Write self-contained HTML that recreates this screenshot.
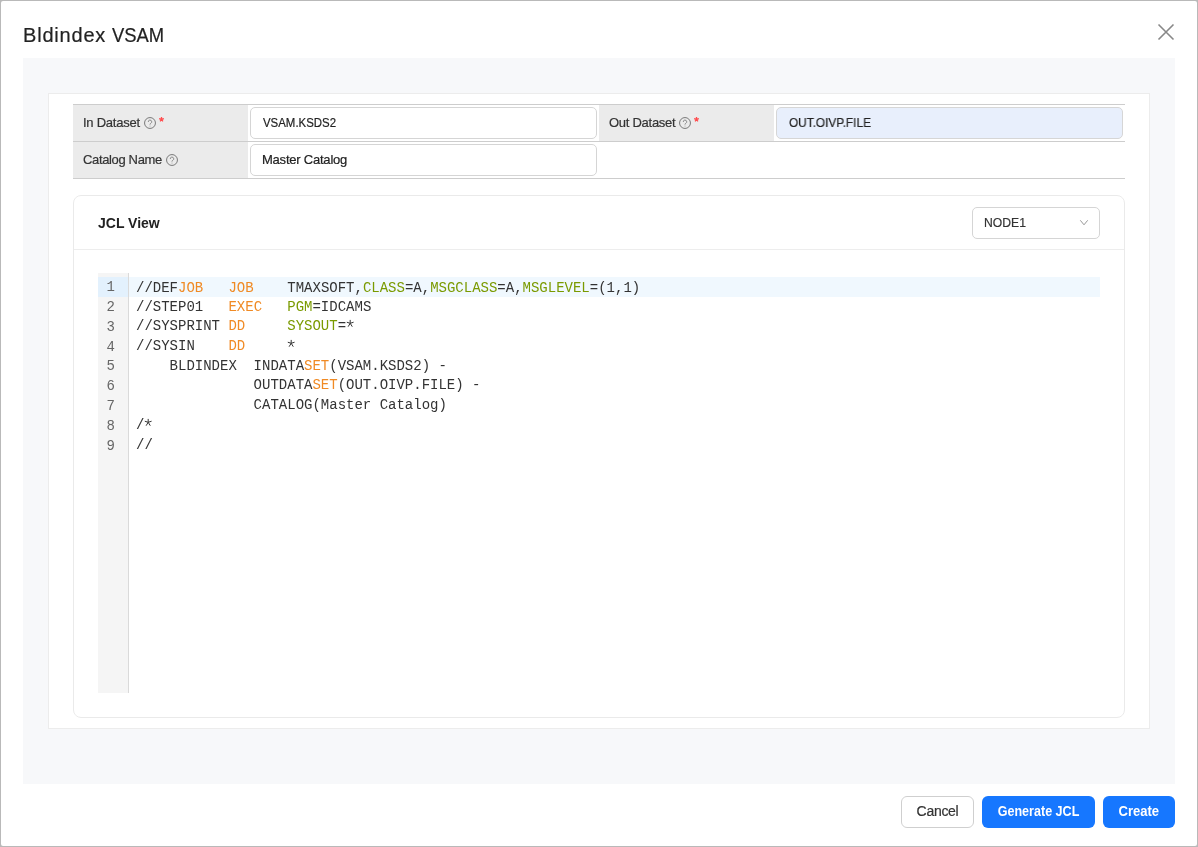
<!DOCTYPE html>
<html>
<head>
<meta charset="utf-8">
<style>
*{box-sizing:border-box;margin:0;padding:0}
html,body{width:1198px;height:847px;overflow:hidden;background:#b9b9b9;font-family:"Liberation Sans",sans-serif;}
.modal{position:absolute;left:1px;top:1px;width:1196px;height:845px;background:#fff;border-radius:2px;}
.abs{position:absolute}
.title{left:23px;top:23px;font-size:20px;line-height:24px;color:#222;white-space:nowrap}
.close{left:1157px;top:23px;width:18px;height:18px}
.content{left:23px;top:58px;width:1152px;height:726px;background:#f7f8fa}
.box{left:48px;top:93px;width:1102px;height:636px;background:#fff;border:1px solid #ececec}
.tbl{left:73px;top:104px;width:1052px;height:75px;border-top:1px solid #cdcdcd}
.row{position:absolute;left:0;width:1052px;height:37px;border-bottom:1px solid #cdcdcd}
.lab{position:absolute;top:0;height:36px;width:175px;background:#ebebeb;font-size:13px;color:#333;padding-left:10px;line-height:36px;white-space:nowrap}
.inp{position:absolute;top:2px;height:32px;border:1px solid #d5d5d5;border-radius:5px;background:#fff;font-size:13px;color:#222;padding-left:12px;line-height:30px;white-space:nowrap}
.help{display:inline-block;width:12px;height:12px;vertical-align:-2px;margin-left:4px}
.req{display:inline-block;margin-left:1.8px;vertical-align:0;position:relative;top:-4px}
.card{left:73px;top:195px;width:1052px;height:523px;border:1px solid #eaeaea;border-radius:8px;background:#fff}
.cardhdr{position:absolute;left:0;top:0;width:1050px;height:54px;border-bottom:1px solid #ededed}
.jcltitle{left:24px;top:17px;font-size:14px;font-weight:700;color:#222;line-height:20px}
.select{left:898px;top:11px;width:128px;height:32px;border:1px solid #d5d5d5;border-radius:5px;font-size:13px;color:#333;padding-left:11px;line-height:30px}
.editor{left:98px;top:273px;width:1002px;height:420px;background:#fff}
.gutter{position:absolute;left:0;top:0;width:31px;height:420px;background:#f5f5f5;border-right:1px solid #dadada}
.ln{position:absolute;left:0;width:30px;height:20px;font-family:"Liberation Mono",monospace;font-size:14px;line-height:20px;color:#666;text-align:right;padding-right:13px}
.ln.act{background:#e3f1fd}
.codeact{position:absolute;left:31px;top:4px;width:971px;height:19.6px;background:#f0f8fe}
.code{position:absolute;left:38px;font-family:"Liberation Mono",monospace;font-size:14px;line-height:20px;color:#333;white-space:pre}
.ast{color:transparent}
.astsvg{position:absolute;top:0}
.sx{display:inline-block;transform-origin:0 50%}
.sx.c{transform-origin:50% 50%}
.k{color:#f08a24}
.g{color:#7a9a00}
.btn{position:absolute;top:796px;height:32px;border-radius:6px;font-size:14px;line-height:31px;text-align:center;white-space:nowrap}
.cancel{left:901px;width:73px;border:1px solid #cfcfcf;background:#fff;color:#333;line-height:29px}
.gen{left:982px;width:113px;background:#1677ff;color:#fff;font-weight:700}
.create{left:1103px;width:72px;background:#1677ff;color:#fff;font-weight:700}
.title,.tbl,.card,.editor,.btn{will-change:transform}
.inp,.lab,.select,.cancel,.title{-webkit-text-stroke:0.2px currentColor}

</style>
</head>
<body>
<div class="modal"></div>
<div class="abs title"><span style="letter-spacing:0.8px">Bldindex</span> <span class="sx" style="transform:scaleX(0.92)">VSAM</span></div>
<svg class="abs close" viewBox="0 0 18 18"><path d="M1.5 1.5L16.5 16.5M16.5 1.5L1.5 16.5" stroke="#888" stroke-width="1.6" fill="none"/></svg>
<div class="abs content"></div>
<div class="abs box"></div>
<div class="abs tbl">
  <div class="row" style="top:0">
    <div class="lab" style="left:0"><span style="letter-spacing:-0.25px">In Dataset</span><svg class="help" viewBox="0 0 12 12"><circle cx="6" cy="6" r="5.45" stroke="#7a7a7a" stroke-width="1" fill="none"/><path d="M4.3 4.9a1.7 1.7 0 1 1 2.5 1.4c-.5.3-.8.6-.8 1.1v.2" stroke="#7a7a7a" stroke-width="0.9" fill="none"/><circle cx="6" cy="9" r="0.5" fill="#9a9a9a"/></svg><svg class="req" width="7" height="7" viewBox="0 0 7 7"><path d="M3.5 3.4V1.0M3.5 3.4L1.1 2.6M3.5 3.4L5.9 2.6M3.5 3.4L2.1 5.4M3.5 3.4L4.9 5.4" stroke="#ff4d4f" stroke-width="1.3" fill="none"/></svg></div>
    <div class="inp" style="left:177px;width:347px"><span class="sx" style="transform:scaleX(0.879)">VSAM.KSDS2</span></div>
    <div class="lab" style="left:526px"><span style="letter-spacing:-0.27px">Out Dataset</span><svg class="help" viewBox="0 0 12 12"><circle cx="6" cy="6" r="5.45" stroke="#7a7a7a" stroke-width="1" fill="none"/><path d="M4.3 4.9a1.7 1.7 0 1 1 2.5 1.4c-.5.3-.8.6-.8 1.1v.2" stroke="#7a7a7a" stroke-width="0.9" fill="none"/><circle cx="6" cy="9" r="0.5" fill="#9a9a9a"/></svg><svg class="req" width="7" height="7" viewBox="0 0 7 7"><path d="M3.5 3.4V1.0M3.5 3.4L1.1 2.6M3.5 3.4L5.9 2.6M3.5 3.4L2.1 5.4M3.5 3.4L4.9 5.4" stroke="#ff4d4f" stroke-width="1.3" fill="none"/></svg></div>
    <div class="inp" style="left:703px;width:347px;background:#e8effc;border-color:#d6d6d6"><span class="sx" style="transform:scaleX(0.91)">OUT.OIVP.FILE</span></div>
  </div>
  <div class="row" style="top:37px">
    <div class="lab" style="left:0"><span style="letter-spacing:-0.35px">Catalog Name</span><svg class="help" viewBox="0 0 12 12"><circle cx="6" cy="6" r="5.45" stroke="#7a7a7a" stroke-width="1" fill="none"/><path d="M4.3 4.9a1.7 1.7 0 1 1 2.5 1.4c-.5.3-.8.6-.8 1.1v.2" stroke="#7a7a7a" stroke-width="0.9" fill="none"/><circle cx="6" cy="9" r="0.5" fill="#9a9a9a"/></svg></div>
    <div class="inp" style="left:177px;width:347px;padding-left:11px"><span style="letter-spacing:-0.22px">Master Catalog</span></div>
  </div>
</div>
<div class="abs card">
  <div class="cardhdr"></div>
  <div class="abs jcltitle">JCL View</div>
  <div class="abs select"><span class="sx" style="transform:scaleX(0.936)">NODE1</span><svg style="position:absolute;left:106px;top:11px" width="10" height="7" viewBox="0 0 10 7"><path d="M1.3 1.3L5 5.8L8.7 1.3" stroke="#999" stroke-width="1" fill="none"/></svg></div>
</div>
<div class="abs editor">
  <div class="gutter"></div>
  <div class="codeact"></div>
  <div class="ln act" style="top:4px">1</div>
  <div class="ln" style="top:24px">2</div>
  <div class="ln" style="top:44px">3</div>
  <div class="ln" style="top:64px">4</div>
  <div class="ln" style="top:83px">5</div>
  <div class="ln" style="top:103px">6</div>
  <div class="ln" style="top:123px">7</div>
  <div class="ln" style="top:143px">8</div>
  <div class="ln" style="top:163px">9</div>
  <div class="code" style="top:5px">//DEF<span class="k">JOB</span>   <span class="k">JOB</span>    TMAXSOFT,<span class="g">CLASS</span>=A,<span class="g">MSGCLASS</span>=A,<span class="g">MSGLEVEL</span>=(1,1)</div>
  <div class="code" style="top:24px">//STEP01   <span class="k">EXEC</span>   <span class="g">PGM</span>=IDCAMS</div>
  <div class="code" style="top:43px">//SYSPRINT <span class="k">DD</span>     <span class="g">SYSOUT</span>=<span class="ast">*</span><svg class="astsvg" style="left:210.01px" width="8.4" height="20" viewBox="0 0 8.4 20"><path d="M4.2 7.3V3.9M4.2 7.3L0.8 6.2M4.2 7.3L7.6 6.2M4.2 7.3L2.1 10.7M4.2 7.3L6.3 10.7" stroke="#333" stroke-width="1" fill="none"/></svg></div>
  <div class="code" style="top:63px">//SYSIN    <span class="k">DD</span>     <span class="ast">*</span><svg class="astsvg" style="left:151.21px" width="8.4" height="20" viewBox="0 0 8.4 20"><path d="M4.2 7.3V3.9M4.2 7.3L0.8 6.2M4.2 7.3L7.6 6.2M4.2 7.3L2.1 10.7M4.2 7.3L6.3 10.7" stroke="#333" stroke-width="1" fill="none"/></svg></div>
  <div class="code" style="top:83px">    BLDINDEX  INDATA<span class="k">SET</span>(VSAM.KSDS2) -</div>
  <div class="code" style="top:102px">              OUTDATA<span class="k">SET</span>(OUT.OIVP.FILE) -</div>
  <div class="code" style="top:122px">              CATALOG(Master Catalog)</div>
  <div class="code" style="top:142px">/<span class="ast">*</span><svg class="astsvg" style="left:8.40px" width="8.4" height="20" viewBox="0 0 8.4 20"><path d="M4.2 7.3V3.9M4.2 7.3L0.8 6.2M4.2 7.3L7.6 6.2M4.2 7.3L2.1 10.7M4.2 7.3L6.3 10.7" stroke="#333" stroke-width="1" fill="none"/></svg></div>
  <div class="code" style="top:162px">//</div>
</div>
<div class="btn cancel"><span style="letter-spacing:-0.3px">Cancel</span></div>
<div class="btn gen"><span class="sx c" style="transform:scaleX(0.897)">Generate JCL</span></div>
<div class="btn create"><span class="sx c" style="transform:scaleX(0.934)">Create</span></div>
</body>
</html>
